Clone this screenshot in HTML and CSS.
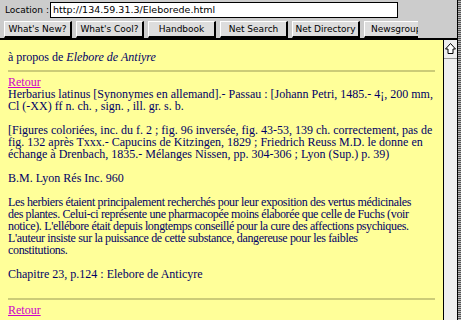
FILE: index.html
```html
<!DOCTYPE html>
<html lang="fr">
<head>
    <meta charset="UTF-8">
    <title>Elebore de Anticyre</title>
    <link rel="stylesheet" href="styles.css">
</head>
<body>

<div class="window">
    <!-- Barre du navigateur -->
    <div class="toolbar">
        <div class="location">
            <span class="location-label">Location :</span>
            <div class="location-field">http://134.59.31.3/Eleborede.html</div>
        </div>
        <div class="nav-buttons">
            <button>What's New?</button>
            <button>What's Cool?</button>
            <button>Handbook</button>
            <button>Net Search</button>
            <button>Net Directory</button>
            <button>Newsgroups</button>
        </div>
    </div>

    <div class="viewport">
        <!-- Page -->
        <div class="page">
            <p class="intro">à propos de <i>Elebore de Antiyre</i></p>
            <hr class="rule-top">
            <p><a href="#">Retour</a><br>
            Herbarius latinus [Synonymes en allemand].- Passau : [Johann Petri, 1485.- 4¡, 200 mm,<br>
            Cl (-XX) ff n. ch. , sign. , ill. gr. s. b.</p>

            <p>[Figures coloriées, inc. du f. 2 ; fig. 96 inversée, fig. 43-53, 139 ch. correctement, pas de<br>
            fig. 132 après Txxx.- Capucins de Kitzingen, 1829 ; Friedrich Reuss M.D. le donne en<br>
            échange à Drenbach, 1835.- Mélanges Nissen, pp. 304-306 ; Lyon (Sup.) p. 39)</p>

            <p>B.M. Lyon Rés Inc. 960</p>

            <p class="notice">Les herbiers étaient principalement recherchés pour leur exposition des vertus médicinales<br>
            des plantes. Celui-ci représente une pharmacopée moins élaborée que celle de Fuchs (voir<br>
            notice). L'ellébore était depuis longtemps conseillé pour la cure des affections psychiques.<br>
            L'auteur insiste sur la puissance de cette substance, dangereuse pour les faibles<br>
            constitutions.</p>

            <p>Chapitre 23, p.124 : Elebore de Anticyre</p>
            <hr class="rule-bottom">
            <p><a href="#">Retour</a></p>
        </div>

        <!-- Ascenseur -->
        <div class="scrollbar">
            <div class="scroll-up">
                <svg width="13" height="16" viewBox="0 0 13 16">
                    <path d="M6.5 2.5 L11.5 8 H9 V12.5 H4 V8 H1.5 Z" fill="#fff" stroke="#000" stroke-width="1"/>
                </svg>
            </div>
        </div>
    </div>
</div>
<div class="frame"></div>

</body>
</html>
```

FILE: styles.css
```css
/* Style général */
body {
    margin: 0;
    display: flex;
    height: 320px;
    overflow: hidden;
    background-color: #ccc;
}

.window {
    width: 457px;
    display: flex;
    flex-direction: column;
    border-right: 1px solid #000;
}

.frame {
    width: 3px;
    background: repeating-linear-gradient(to bottom, #555 0, #555 1px, #bbb 1px, #bbb 2px);
}

/* Barre du navigateur */
.toolbar {
    height: 42px;
    background-color: #cccccc;
    border-bottom: 2px solid #000;
    font-family: 'DejaVu Sans', sans-serif;
    font-size: 9px;
    color: #000;
}

.location {
    display: flex;
    align-items: center;
    height: 16px;
    padding: 2px 0 0 5px;
}

.location-label {
    width: 45px;
}

.location-field {
    width: 344px;
    height: 14px;
    line-height: 14px;
    background-color: #fff;
    border: 1px solid #000;
    padding-left: 2px;
    font-size: 9.5px;
}

.nav-buttons {
    display: flex;
    gap: 4px;
    width: 414px;
    overflow: hidden;
    padding: 3px 0 0 4px;
}

.nav-buttons button {
    flex: none;
    width: 68px;
    height: 17px;
    padding: 0;
    background-color: #dddddd;
    border-top: 1px solid #fff;
    border-left: 1px solid #fff;
    border-right: 2px solid #000;
    border-bottom: 2px solid #000;
    font-family: 'DejaVu Sans', sans-serif;
    font-size: 9px;
    color: #000;
    white-space: nowrap;
    text-align: center;
}

.nav-buttons button:last-child {
    text-align: left;
    padding-left: 6px;
}

/* Zone d'affichage */
.viewport {
    flex: 1;
    display: flex;
}

.page {
    flex: 1;
    background-color: #ffff99;
    padding: 11px 8px 0 8px;
    font-family: 'Liberation Serif', serif;
    font-size: 12px;
    line-height: 12px;
    color: #000066;
    overflow: hidden;
}

.page p {
    margin: 0 0 12px 0;
    white-space: nowrap;
}

.page p.intro {
    margin: 0;
}

.page p.notice {
    letter-spacing: -0.35px;
}

.page a {
    color: #cc00cc;
}

.page hr {
    border: none;
    height: 2px;
    background-color: #cccc77;
}

.rule-top {
    margin: 7px 0 4px 0;
}

.rule-bottom {
    margin: 18px 0 4px 0;
}

/* Ascenseur */
.scrollbar {
    width: 13px;
    background-color: #eeeeee;
    border-left: 1px solid #000;
}

.scroll-up {
    height: 18px;
    border-bottom: 1px solid #999;
    display: flex;
    justify-content: center;
    align-items: center;
}
```
